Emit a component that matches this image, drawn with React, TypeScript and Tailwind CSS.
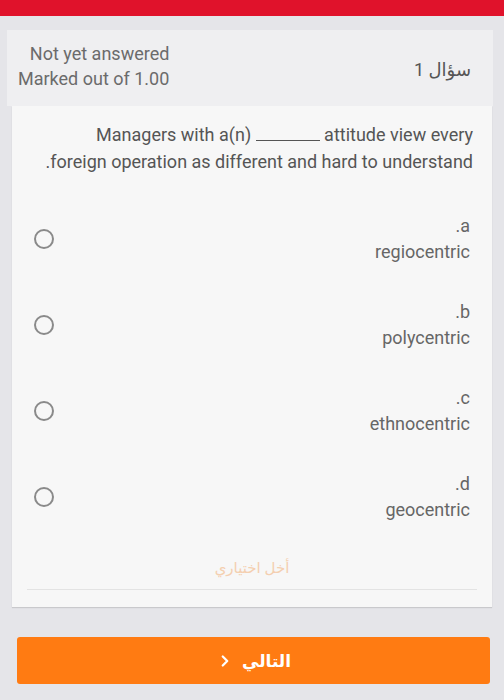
import { ChevronRight } from 'lucide-react';

const options = [
  { key: 'a', text: 'regiocentric' },
  { key: 'b', text: 'polycentric' },
  { key: 'c', text: 'ethnocentric' },
  { key: 'd', text: 'geocentric' },
];

export default function App() {
  return (
    <div
      dir="rtl"
      className="w-[504px] h-[700px] bg-[#e5e5e9] overflow-hidden"
      style={{ fontFamily: 'Roboto, "Noto Sans", "DejaVu Sans", sans-serif' }}
    >
      {/* top bar */}
      <div className="h-[16px] bg-[#e0122b]" />

      <div className="pt-[14px] pl-[7px] pr-[11px]">
        {/* question info */}
        <div className="h-[76px] bg-[#efeff1] flex items-start justify-between pr-[22px] pl-[11px] pt-[11px]">
          <div className="text-[18px] text-[#555] mt-[15px]">سؤال 1</div>
          <div className="text-[18px] leading-[25px] text-[#6b6b6b] text-right">
            <div>Not yet answered</div>
            <div>Marked out of 1.00</div>
          </div>
        </div>

        {/* content */}
        <div className="ml-[5px] mr-[1px] bg-[#f7f7f7] shadow-[0_1px_1px_rgba(0,0,0,0.12)] pt-[15px]">
          <p className="text-[18px] leading-[27px] text-[#555] pr-[19px]">
            Managers with a(n){' '}
            <span className="inline-block w-[64px] border-b border-[#555] align-baseline" />{' '}
            attitude view every
            <br />
            foreign operation as different and hard to understand.
          </p>

          <div className="mt-[21px]">
            {options.map((o) => (
              <div key={o.key} className="h-[86px] flex items-center justify-between pr-[22px] pl-[22px]">
                <div className="text-[18px] leading-[26.5px] text-[#666] text-right">
                  <div>{o.key}.</div>
                  <div>{o.text}</div>
                </div>
                <div className="w-[20px] h-[20px] rounded-full border-[2px] border-[#8a8a8a]" />
              </div>
            ))}
          </div>

          <div className="mt-[15px] text-center text-[15px] leading-[24px] text-[#f4cfb0]" style={{ fontFamily: '"Noto Sans", "DejaVu Sans", sans-serif' }}>
            أخل اختياري
          </div>
          <div className="mx-[15px] mt-[10px] border-b border-[#e3e3e3]" />
          <div className="h-[17px]" />
        </div>

        {/* next button */}
        <div className="mt-[30px] ml-[10px] mr-[3px] h-[47px] rounded-[3px] bg-[#ff7b12] flex items-center justify-center gap-[8px] text-white">
          <span className="text-[17px] font-bold" style={{ fontFamily: '"Noto Sans", "DejaVu Sans", sans-serif' }}>
            التالي
          </span>
          <ChevronRight className="w-[18px] h-[18px]" strokeWidth={3} />
        </div>
      </div>
    </div>
  );
}
